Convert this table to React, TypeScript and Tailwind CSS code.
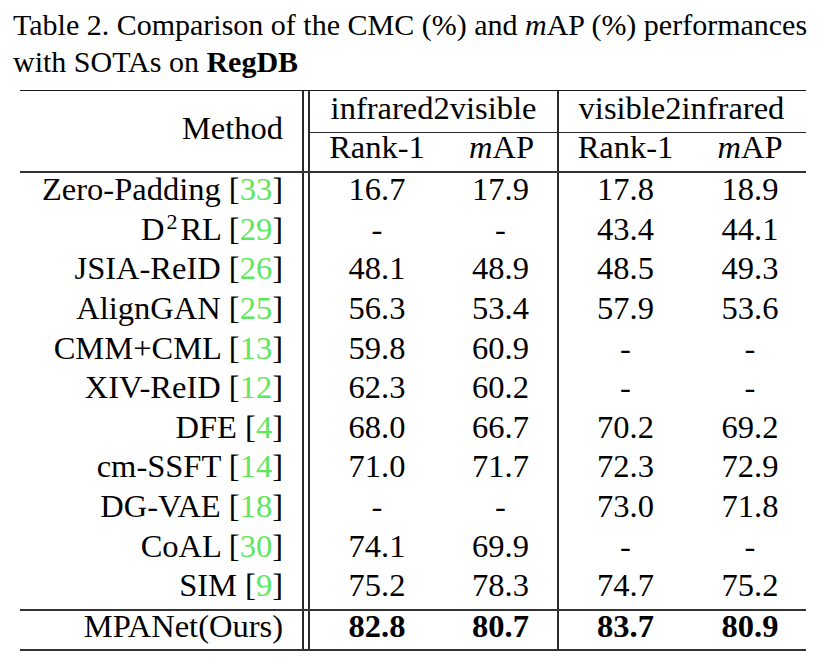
import React from "react";

type Row = { name: React.ReactNode; cite: string; v: string[] };

const rows: Row[] = [
  { name: "Zero-Padding", cite: "33", v: ["16.7", "17.9", "17.8", "18.9"] },
  {
    name: (
      <>
        D<sup className="ml-[2px] mr-[3px] text-[22px]">2</sup>RL
      </>
    ),
    cite: "29",
    v: ["-", "-", "43.4", "44.1"],
  },
  { name: "JSIA-ReID", cite: "26", v: ["48.1", "48.9", "48.5", "49.3"] },
  { name: "AlignGAN", cite: "25", v: ["56.3", "53.4", "57.9", "53.6"] },
  { name: "CMM+CML", cite: "13", v: ["59.8", "60.9", "-", "-"] },
  { name: "XIV-ReID", cite: "12", v: ["62.3", "60.2", "-", "-"] },
  { name: "DFE", cite: "4", v: ["68.0", "66.7", "70.2", "69.2"] },
  { name: "cm-SSFT", cite: "14", v: ["71.0", "71.7", "72.3", "72.9"] },
  { name: "DG-VAE", cite: "18", v: ["-", "-", "73.0", "71.8"] },
  { name: "CoAL", cite: "30", v: ["74.1", "69.9", "-", "-"] },
  { name: "SIM", cite: "9", v: ["75.2", "78.3", "74.7", "75.2"] },
];

const rowClasses = [
  "row-start-6",
  "row-start-7",
  "row-start-8",
  "row-start-9",
  "row-start-10",
  "row-start-11",
  "row-start-12",
  "row-start-13",
  "row-start-14",
  "row-start-15",
  "row-start-16",
];

const colClasses = ["col-start-3", "col-start-4", "col-start-5", "col-start-6"];

export default function App() {
  return (
    <div className="w-[826px] h-[659px] bg-white text-black [font-family:'Liberation_Serif',serif] overflow-hidden">
      <div className="pl-[13px] pt-[6px] text-[30px] leading-[37px]">
        <div className="whitespace-nowrap">
          Table 2. Comparison of the CMC (%) and <i>m</i>AP (%) performances
        </div>
        <div className="whitespace-nowrap">
          with SOTAs on <b>RegDB</b>
        </div>
      </div>

      <div className="ml-[20px] mt-[10px] grid w-[786px] grid-cols-[282px_8px_134px_113px_137px_112px] grid-rows-[1px_41px_1px_38px_2px_repeat(11,39.636px)_2px_38px_2px] text-[32.5px]">
        {/* vertical rules */}
        <div className="col-start-2 row-start-2 row-end-19 border-x-2 border-[#2a2a2a]" />
        <div className="col-start-5 row-start-2 row-end-19 border-l-2 border-[#2a2a2a]" />

        {/* header */}
        <div className="col-start-1 row-start-2 row-end-5 pr-[19px] pt-[20px] text-right leading-[34px]">
          Method
        </div>
        <div className="col-start-3 col-end-5 row-start-2 text-center leading-[34px]">
          infrared2visible
        </div>
        <div className="col-start-5 col-end-7 row-start-2 text-center leading-[34px]">
          visible2infrared
        </div>
        <div className="col-start-3 col-end-7 row-start-3 bg-[#2a2a2a]" />
        <div className="col-start-3 row-start-4 text-center leading-[29px]">Rank-1</div>
        <div className="col-start-4 row-start-4 text-center leading-[29px] pl-[2px]">
          <i>m</i>AP
        </div>
        <div className="col-start-5 row-start-4 text-center leading-[29px]">Rank-1</div>
        <div className="col-start-6 row-start-4 text-center leading-[29px]">
          <i>m</i>AP
        </div>

        {/* rules */}
        <div className="col-start-1 col-end-7 row-start-1 bg-[#1a1a1a]" />
        <div className="col-start-1 col-end-7 row-start-5 bg-[#333]" />
        <div className="col-start-1 col-end-7 row-start-17 bg-[#333]" />
        <div className="col-start-1 col-end-7 row-start-19 bg-[#333]" />

        {/* data rows */}
        {rows.map((r, i) => (
          <React.Fragment key={i}>
            <div className={`col-start-1 ${rowClasses[i]} pr-[19px] text-right leading-[32px] whitespace-nowrap`}>
              {r.name} [<span className="text-[#5ee65e]">{r.cite}</span>]
            </div>
            {r.v.map((val, j) => (
              <div
                key={j}
                className={`${colClasses[j]} ${rowClasses[i]} text-center leading-[32px]`}
              >
                {val}
              </div>
            ))}
          </React.Fragment>
        ))}

        {/* ours */}
        <div className="col-start-1 row-start-18 pr-[19px] text-right leading-[30px] whitespace-nowrap">
          MPANet(Ours)
        </div>
        <div className="col-start-3 row-start-18 text-center leading-[30px] font-bold">82.8</div>
        <div className="col-start-4 row-start-18 text-center leading-[30px] font-bold">80.7</div>
        <div className="col-start-5 row-start-18 text-center leading-[30px] font-bold">83.7</div>
        <div className="col-start-6 row-start-18 text-center leading-[30px] font-bold">80.9</div>
      </div>
    </div>
  );
}
